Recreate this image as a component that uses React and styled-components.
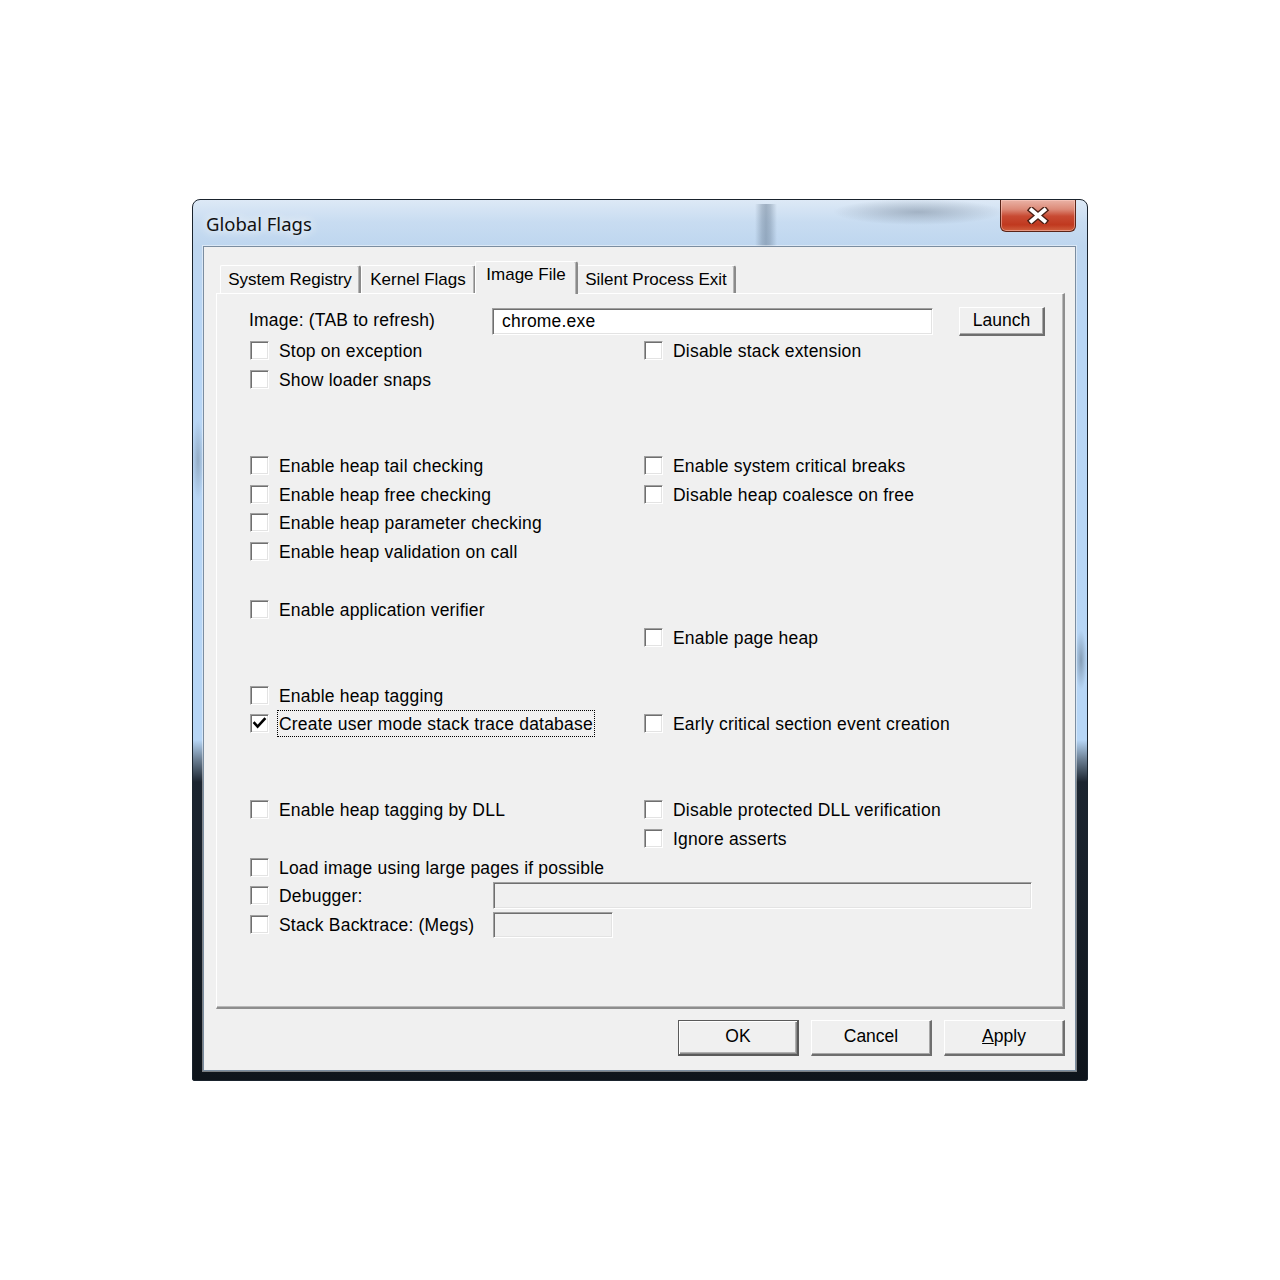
import React from "react";
import styled, { createGlobalStyle } from "styled-components";

const Global = createGlobalStyle`
  html, body { margin: 0; padding: 0; background: #fff; }
  * { box-sizing: border-box; }
`;

const Page = styled.div`
  width: 1280px;
  height: 1280px;
  display: flex;
  align-items: center;
  justify-content: center;
  font-family: "Liberation Sans", Arial, sans-serif;
`;

const Window = styled.div`
  width: 896px;
  height: 882px;
  border: 1px solid #1a232d;
  border-radius: 8px 8px 2px 2px;
  padding: 0 11px 9px 10px;
  display: flex;
  flex-direction: column;
  background:
    linear-gradient(90deg, transparent 562px, rgba(90, 110, 132, 0.35) 569px, rgba(90, 110, 132, 0.45) 573px, rgba(90, 110, 132, 0.35) 577px, transparent 584px) 0 4px / 100% 42px no-repeat,
    radial-gradient(ellipse 85px 13px at 725px 12px, rgba(105, 120, 138, 0.45), transparent) 0 0 / 100% 46px no-repeat,
    radial-gradient(ellipse 6px 40px at 5px 260px, rgba(110, 130, 150, 0.5), transparent),
    radial-gradient(ellipse 6px 30px at 888px 460px, rgba(100, 120, 140, 0.6), transparent),
    linear-gradient(180deg, #dde9f6 0px, #c8dcf1 22px, #bed6ef 46px, #b9d6f5 130px, #b7d6f6 540px, #6a7d91 560px, #1c2530 582px, #0e141b 100%);
`;

const TitleBar = styled.div`
  height: 46px;
  flex: none;
  display: flex;
  align-items: center;
  justify-content: space-between;
  padding-left: 3px;
`;

const Title = styled.span`
  font-family: "Noto Sans", "Open Sans", sans-serif;
  font-size: 18.5px;
  color: #111;
  text-shadow: 0 0 8px rgba(255, 255, 255, 0.95), 0 0 14px rgba(255, 255, 255, 0.8);
`;

const CloseButton = styled.div`
  align-self: flex-start;
  width: 76px;
  height: 32px;
  border: 1px solid #5a2418;
  border-top: none;
  border-radius: 0 0 6px 6px;
  background: linear-gradient(180deg, #eab3a6 0%, #dc8a78 30%, #c84a33 52%, #c0391f 80%, #d0603f 100%);
  box-shadow: inset 0 0 0 1px rgba(255, 210, 200, 0.5);
  display: flex;
  align-items: center;
  justify-content: center;
`;

const Client = styled.div`
  flex: 1;
  display: flex;
  flex-direction: column;
  background: #f0f0f0;
  border: 1px solid #7b8da0;
  box-shadow: 0 0 0 1px rgba(255, 255, 255, 0.45);
  padding: 14px 10px 14px 12px;
`;

const TabStrip = styled.div`
  height: 32px;
  flex: none;
  display: flex;
  align-items: flex-end;
  padding-left: 4px;
  position: relative;
  z-index: 1;
`;

const Tab = styled.div`
  width: ${(p) => p.$w}px;
  height: ${(p) => (p.$active ? 33 : 28)}px;
  margin: ${(p) => (p.$active ? "0 -1px -1px -1px" : "0")};
  background: #f0f0f0;
  border-style: solid;
  border-width: 1px 2px 0 1px;
  border-color: #ffffff #8a8a8a #ffffff #ffffff;
  border-radius: 2px 3px 0 0;
  box-shadow: inset -1px 0 0 #b4b4b4;
  display: flex;
  align-items: ${(p) => (p.$active ? "flex-start" : "center")};
  padding-top: ${(p) => (p.$active ? "3px" : "0")};
  justify-content: center;
  font-size: 17px;
  color: #000;
  position: relative;
  z-index: ${(p) => (p.$active ? 2 : 1)};
`;

const Panel = styled.div`
  height: 716px;
  flex: none;
  border-style: solid;
  border-width: 1px 2px 2px 1px;
  border-color: #ffffff #8e8e8e #8e8e8e #ffffff;
  box-shadow: inset -1px -1px 0 #b9b9b9;
  padding: 13px 0 0 33px;
  font-size: 17.5px;
  letter-spacing: 0.2px;
  color: #000;
`;

const HeaderRow = styled.div`
  height: 29px;
  display: flex;
  align-items: center;
`;

const HeaderLabel = styled.span`
  width: 243px;
  margin-left: -1px;
  padding-bottom: 3px;
`;

const Field = styled.div`
  width: ${(p) => p.$w}px;
  height: ${(p) => p.$h}px;
  background: ${(p) => (p.$disabled ? "#f0f0f0" : "#ffffff")};
  border-style: solid;
  border-width: 1px;
  border-color: #a0a0a0 #ffffff #ffffff #a0a0a0;
  box-shadow: inset 1px 1px 0 #6f6f6f, inset -1px -1px 0 #e3e3e3;
  display: flex;
  align-items: center;
  padding-left: 9px;
  font-size: 17.5px;
  color: #000;
`;

const Button = styled.div`
  width: ${(p) => p.$w}px;
  height: ${(p) => p.$h}px;
  margin-left: ${(p) => p.$ml || 0}px;
  background: #f0f0f0;
  border-style: solid;
  border-width: 1px 2px 2px 1px;
  border-color: ${(p) => (p.$default ? "#5a5a5a #5a5a5a #5a5a5a #5a5a5a" : "#ffffff #6e6e6e #6e6e6e #ffffff")};
  box-shadow: ${(p) =>
    p.$default
      ? "inset 1px 1px 0 #ffffff, inset -1px -1px 0 #8a8a8a, inset -2px -2px 0 #b0b0b0"
      : "inset -1px -1px 0 #a8a8a8"};
  display: flex;
  align-items: center;
  justify-content: center;
  font-size: 17.5px;
  letter-spacing: 0;
  color: #000;
  padding-bottom: 2px;
`;

const Grid = styled.div`
  display: grid;
  grid-template-columns: 394px 1fr;
  grid-auto-rows: 28.7px;
  padding-top: 0.5px;
`;

const CheckRow = styled.div`
  grid-row: ${(p) => p.$row + 1};
  grid-column: ${(p) => (p.$span ? "1 / span 2" : p.$col)};
  display: flex;
  align-items: center;
`;

const CheckItem = styled.div`
  display: flex;
  align-items: center;
  gap: 8px;
  width: ${(p) => (p.$w ? `${p.$w}px` : "auto")};
  flex: none;
`;

const Box = styled.span`
  width: 19px;
  height: 19px;
  flex: none;
  background: #ffffff;
  border-style: solid;
  border-width: 1px;
  border-color: #a0a0a0 #ffffff #ffffff #a0a0a0;
  box-shadow: inset 1px 1px 0 #6f6f6f, inset -1px -1px 0 #e3e3e3;
  display: flex;
  align-items: center;
  justify-content: center;
`;

const Label = styled.span`
  border: 1px ${(p) => (p.$focus ? "dotted #000" : "solid transparent")};
  padding: 1px 1px 0 1px;
  line-height: 24px;
  white-space: nowrap;
`;

const ButtonRow = styled.div`
  margin-top: 11px;
  height: 36px;
  display: flex;
  justify-content: flex-end;
  gap: 12px;
`;

const Check = ({ label, checked, focus, w }) => (
  <CheckItem $w={w}>
    <Box>
      {checked && (
        <svg width="15" height="15" viewBox="0 0 15 15">
          <path d="M2.5 7.2 L5.6 10.6 L12.5 3" fill="none" stroke="#000" strokeWidth="2.6" strokeLinecap="square" />
        </svg>
      )}
    </Box>
    <Label $focus={focus}>{label}</Label>
  </CheckItem>
);

const items = [
  { row: 0, col: 1, label: "Stop on exception" },
  { row: 0, col: 2, label: "Disable stack extension" },
  { row: 1, col: 1, label: "Show loader snaps" },
  { row: 4, col: 1, label: "Enable heap tail checking" },
  { row: 4, col: 2, label: "Enable system critical breaks" },
  { row: 5, col: 1, label: "Enable heap free checking" },
  { row: 5, col: 2, label: "Disable heap coalesce on free" },
  { row: 6, col: 1, label: "Enable heap parameter checking" },
  { row: 7, col: 1, label: "Enable heap validation on call" },
  { row: 9, col: 1, label: "Enable application verifier" },
  { row: 10, col: 2, label: "Enable page heap" },
  { row: 12, col: 1, label: "Enable heap tagging" },
  { row: 13, col: 1, label: "Create user mode stack trace database", checked: true, focus: true },
  { row: 13, col: 2, label: "Early critical section event creation" },
  { row: 16, col: 1, label: "Enable heap tagging by DLL" },
  { row: 16, col: 2, label: "Disable protected DLL verification" },
  { row: 17, col: 2, label: "Ignore asserts" },
  { row: 18, col: 1, label: "Load image using large pages if possible" },
];

const tabs = [
  { label: "System Registry", w: 141 },
  { label: "Kernel Flags", w: 115 },
  { label: "Image File", w: 103, active: true },
  { label: "Silent Process Exit", w: 159 },
];

export default function App() {
  return (
    <>
      <Global />
      <Page>
        <Window>
          <TitleBar>
            <Title>Global Flags</Title>
            <CloseButton>
              <svg width="22" height="17" viewBox="0 0 22 17">
                <path d="M4.5 3 L17.5 14 M17.5 3 L4.5 14" stroke="#4a2015" strokeWidth="6.5" strokeLinecap="square" fill="none" />
                <path d="M4.5 3 L17.5 14 M17.5 3 L4.5 14" stroke="#ffffff" strokeWidth="3.8" strokeLinecap="square" fill="none" />
              </svg>
            </CloseButton>
          </TitleBar>
          <Client>
            <TabStrip>
              {tabs.map((t) => (
                <Tab key={t.label} $w={t.w} $active={t.active}>
                  {t.label}
                </Tab>
              ))}
            </TabStrip>
            <Panel>
              <HeaderRow>
                <HeaderLabel>Image: (TAB to refresh)</HeaderLabel>
                <Field $w={441} $h={27}>chrome.exe</Field>
                <Button $w={86} $h={29} $ml={26}>Launch</Button>
              </HeaderRow>
              <Grid>
                {items.map((it) => (
                  <CheckRow key={it.label} $row={it.row} $col={it.col}>
                    <Check label={it.label} checked={it.checked} focus={it.focus} />
                  </CheckRow>
                ))}
                <CheckRow $row={19} $span>
                  <Check label="Debugger:" w={243} />
                  <Field $w={539} $h={27} $disabled />
                </CheckRow>
                <CheckRow $row={20} $span>
                  <Check label="Stack Backtrace: (Megs)" w={243} />
                  <Field $w={120} $h={26} $disabled />
                </CheckRow>
              </Grid>
            </Panel>
            <ButtonRow>
              <Button $w={121} $h={36} $default>OK</Button>
              <Button $w={121} $h={36}>Cancel</Button>
              <Button $w={121} $h={36}>
                <span><u>A</u>pply</span>
              </Button>
            </ButtonRow>
          </Client>
        </Window>
      </Page>
    </>
  );
}
